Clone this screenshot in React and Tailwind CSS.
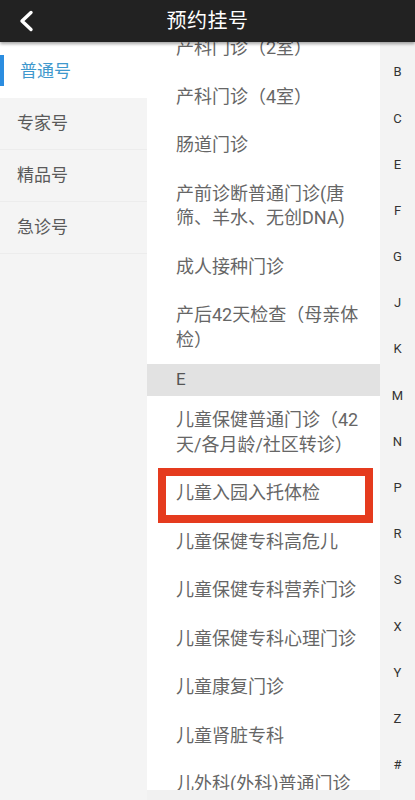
import React from 'react'

const tabs = ['普通号', '专家号', '精品号', '急诊号']

const letters = ['B', 'C', 'E', 'F', 'G', 'J', 'K', 'M', 'N', 'P', 'R', 'S', 'X', 'Y', 'Z', '#']

// lines are split by hand so wrapping matches the phone screenshot
const rows = [
  { lines: ['产科门诊（2室）'] },
  { lines: ['产科门诊（4室）'] },
  { lines: ['肠道门诊'] },
  { lines: ['产前诊断普通门诊(唐', '筛、羊水、无创DNA)'] },
  { lines: ['成人接种门诊'] },
  { lines: ['产后42天检查（母亲体', '检）'] },
  { section: 'E' },
  { lines: ['儿童保健普通门诊（42', '天/各月龄/社区转诊）'] },
  { lines: ['儿童入园入托体检'], marked: true },
  { lines: ['儿童保健专科高危儿'] },
  { lines: ['儿童保健专科营养门诊'] },
  { lines: ['儿童保健专科心理门诊'] },
  { lines: ['儿童康复门诊'] },
  { lines: ['儿童肾脏专科'] },
  { lines: ['儿外科(外科)普通门诊'] },
]

const Header = () => (
  <div className="relative z-10 h-[42px] shrink-0 bg-[#222222] grid grid-cols-[60px_1fr_60px] items-center shadow-[0_2px_3px_rgba(0,0,0,0.35)]">
    <div className="pl-[18px] flex items-center">
      <svg width="16" height="22" viewBox="0 0 16 22" fill="none">
        <polyline points="13,2.5 4,11 13,19.5" stroke="#ffffff" strokeWidth="3.4" strokeLinecap="round" strokeLinejoin="round" />
      </svg>
    </div>
    <div className="text-center text-white text-[20px] leading-none tracking-[0.5px]">预约挂号</div>
    <div></div>
  </div>
)

const Sidebar = () => (
  <div className="w-[147px] shrink-0 bg-[#f4f4f4] flex flex-col">
    {tabs.map((t, i) =>
      i === 0 ? (
        <div key={t} className="relative h-[56px] pt-[4px] bg-white flex items-center pl-[20px] text-[17px] text-[#3f98cd]">
          <span className="absolute left-0 top-[13px] h-[31px] w-[4px] bg-[#2b8de0]"></span>
          {t}
        </div>
      ) : (
        <div key={t} className="h-[52px] flex items-center pl-[17px] text-[17px] text-[#5a5a5a] border-b border-[#ececec]">
          {t}
        </div>
      )
    )}
  </div>
)

const List = () => (
  <div className="flex-1 min-w-0 flex flex-col bg-[#f1f1f1]">
    <div className="h-[748px] shrink-0 overflow-hidden bg-white">
      <div className="-mt-[18px] flex flex-col">
        {rows.map((r, i) =>
          r.section ? (
            <div key={i} className="h-[32px] bg-[#e2e2e2] flex items-center pl-[29px] text-[17px] text-[#555555]">
              {r.section}
            </div>
          ) : (
            <div key={i} className="relative py-[12px] pl-[29px] pr-[10px] text-[18px] leading-[24.5px] text-[#666666] whitespace-nowrap">
              {r.lines.map((l, j) => (
                <div key={j}>{l}</div>
              ))}
              {r.marked && (
                <span className="absolute -top-[1px] -bottom-[5px] left-[11px] right-[7px] border-[8px] border-[#e53b1e]"></span>
              )}
            </div>
          )
        )}
      </div>
    </div>
  </div>
)

const IndexBar = () => (
  <div className="w-[35px] shrink-0 bg-[#f3f3f3] flex flex-col pt-[7px]">
    {letters.map((l) => (
      <div key={l} className="h-[46.2px] flex items-center justify-center text-[13px] text-[#333333]">
        {l}
      </div>
    ))}
  </div>
)

export default function App() {
  return (
    <div className="w-[415px] h-[800px] overflow-hidden flex flex-col bg-white font-['Roboto','Noto_Sans_CJK_SC',sans-serif]">
      <Header />
      <div className="flex flex-1 min-h-0">
        <Sidebar />
        <List />
        <IndexBar />
      </div>
    </div>
  )
}
